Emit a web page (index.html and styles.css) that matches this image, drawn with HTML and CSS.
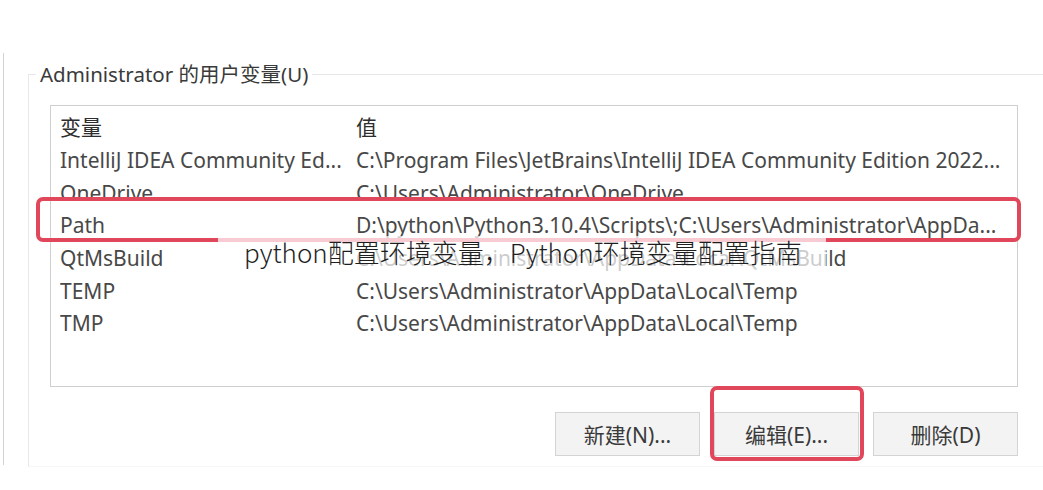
FILE: index.html
```html
<!DOCTYPE html>
<html lang="zh-CN">
<head>
<meta charset="utf-8">
<title>Administrator 的用户变量</title>
<link rel="stylesheet" href="styles.css">
</head>
<body>
<div class="page">
  <div class="side"></div>
  <fieldset class="group">
    <legend class="group-title">Administrator 的用户变量(U)</legend>
    <div class="list">
      <div class="row head"><span class="c1">变量</span><span class="c2">值</span></div>
      <div class="row"><span class="c1">IntelliJ IDEA Community Ed...</span><span class="c2">C:\Program Files\JetBrains\IntelliJ IDEA Community Edition 2022...</span></div>
      <div class="row"><span class="c1">OneDrive</span><span class="c2">C:\Users\Administrator\OneDrive</span></div>
      <div class="row"><span class="c1">Path</span><span class="c2">D:\python\Python3.10.4\Scripts\;C:\Users\Administrator\AppDa...</span></div>
      <div class="row"><span class="c1">QtMsBuild</span><span class="c2">C:\Users\Administrator\AppData\Local\QtMsBuild</span></div>
      <div class="row"><span class="c1">TEMP</span><span class="c2">C:\Users\Administrator\AppData\Local\Temp</span></div>
      <div class="row"><span class="c1">TMP</span><span class="c2">C:\Users\Administrator\AppData\Local\Temp</span></div>
    </div>
    <div class="buttons">
      <button class="btn">新建(N)...</button>
      <button class="btn">编辑(E)...</button>
      <button class="btn">删除(D)</button>
    </div>
  </fieldset>
  <div class="mark mark-path"></div>
  <div class="mark mark-edit"></div>
  <div class="caption">python配置环境变量，Python环境变量配置指南</div>
</div>
</body>
</html>
```

FILE: styles.css
```css
* { box-sizing: border-box; }

html, body {
  margin: 0;
  padding: 0;
  background: #ffffff;
}

body {
  font-family: "Noto Sans", "Noto Sans CJK SC", sans-serif;
  color: #3c3c3c;
}

.page {
  position: relative;
  width: 1043px;
  height: 490px;
  overflow: hidden;
  display: flex;
  align-items: flex-start;
  background: #ffffff;
}

.side {
  width: 4px;
  height: 412px;
  margin-top: 53px;
  border-right: 1px solid #d2d2d2;
  flex: none;
}

.group {
  flex: none;
  width: 1040px;
  margin: 62px 0 0 24px;
  padding: 0 0 10px 0;
  border: 1px solid #e8e8e8;
  border-right: none;
  border-bottom-color: #f6f6f6;
  min-width: 0;
}

.group-title {
  margin-left: 7px;
  padding: 0 4px;
  font-size: 20.5px;
  line-height: 24px;
  color: #3a3a3a;
  font-family: "Noto Sans", "Noto Sans CJK SC", sans-serif;
}

.list {
  width: 968px;
  height: 282px;
  margin: 19px 0 0 21px;
  padding-top: 5px;
  border: 1px solid #cfcfcf;
  background: #ffffff;
}

.row {
  display: grid;
  grid-template-columns: 296px 1fr;
  height: 32.67px;
  align-items: center;
  padding-left: 9px;
  font-size: 21px;
  line-height: 26px;
  color: #484848;
  white-space: nowrap;
}

.row span {
  overflow: hidden;
}

.row.head {
  color: #2e2e2e;
}

.buttons {
  width: 968px;
  margin-left: 21px;
  display: flex;
  justify-content: flex-end;
  gap: 14px;
  margin-top: 25px;
}

.btn {
  width: 145px;
  height: 44px;
  border: 1px solid #d4d4d4;
  background: #f3f3f3;
  font-family: "Noto Sans", "Noto Sans CJK SC", sans-serif;
  font-size: 21px;
  color: #3a3a3a;
  padding: 0;
}

.mark {
  position: absolute;
  border: 4px solid #e1475b;
  border-radius: 7px;
}

.mark-path {
  left: 36px;
  top: 197px;
  width: 985px;
  height: 45px;
}

.mark-edit {
  left: 710px;
  top: 386px;
  width: 154px;
  height: 75px;
}

.caption {
  position: absolute;
  left: 218px;
  top: 236px;
  width: 608px;
  height: 35px;
  padding-left: 26px;
  background: rgba(255, 255, 255, 0.72);
  font-family: "Noto Sans CJK SC", sans-serif;
  font-weight: 300;
  font-size: 26px;
  line-height: 32px;
  color: #1e1e1e;
  white-space: nowrap;
}
```
